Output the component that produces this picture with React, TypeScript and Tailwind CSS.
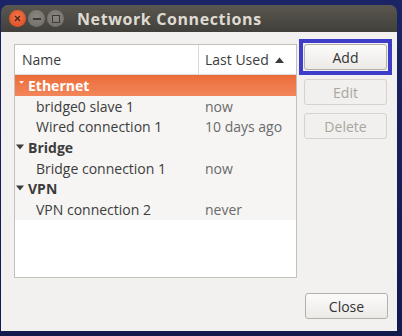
import React from 'react';

const font = { fontFamily: '"Open Sans", "DejaVu Sans", sans-serif' };

type Row = { name: string; used?: string; group?: boolean; selected?: boolean };

const rows: Row[] = [
  { name: 'Ethernet', group: true, selected: true },
  { name: 'bridge0 slave 1', used: 'now' },
  { name: 'Wired connection 1', used: '10 days ago' },
  { name: 'Bridge', group: true },
  { name: 'Bridge connection 1', used: 'now' },
  { name: 'VPN', group: true },
  { name: 'VPN connection 2', used: 'never' },
];

function Expander({ light }: { light?: boolean }) {
  if (light) {
    return (
      <svg width="5" height="4" viewBox="0 0 5 4" className="absolute left-[4px] top-[6px]">
        <path d="M0 0 H5 L2.5 3 Z" fill="#fff" opacity="0.85" />
      </svg>
    );
  }
  return (
    <svg width="8" height="6" viewBox="0 0 8 6" className="absolute left-[1px] top-[7px]">
      <path d="M0 0.5 H8 L4 5.5 Z" fill="#3c3c3c" />
    </svg>
  );
}

function TitleButtons() {
  return (
    <div className="flex items-center gap-[2px] pl-[8px]">
      <div className="w-[17px] h-[17px] rounded-full bg-[radial-gradient(circle_at_50%_40%,#f4764a,#d8451d)] flex items-center justify-center">
        <svg width="7" height="7" viewBox="0 0 7 7">
          <path d="M1 1 L6 6 M6 1 L1 6" stroke="#4a2418" strokeWidth="1.4" />
        </svg>
      </div>
      <div className="w-[17px] h-[17px] rounded-full bg-[radial-gradient(circle_at_50%_40%,#8a8780,#6c6a64)] flex items-center justify-center">
        <div className="w-[8px] h-[2px] bg-[#3b3a36]" />
      </div>
      <div className="w-[17px] h-[17px] rounded-full bg-[radial-gradient(circle_at_50%_40%,#8a8780,#6c6a64)] flex items-center justify-center">
        <div className="w-[8px] h-[8px] border-[1.5px] border-[#3b3a36]" />
      </div>
    </div>
  );
}

function Btn({ label, disabled }: { label: string; disabled?: boolean }) {
  return (
    <div
      className={
        disabled
          ? 'w-[83px] h-[26px] rounded-[3px] border border-[#d6d3ce] bg-[#f1f0ee] flex items-center justify-center text-[14px] text-[#a9a6a0]'
          : 'w-[83px] h-[26px] rounded-[3px] border border-[#b3b0aa] bg-gradient-to-b from-[#fbfbfa] to-[#eceae7] flex items-center justify-center text-[14px] text-[#333333]'
      }
    >
      {label}
    </div>
  );
}

export default function App() {
  return (
    <div className="w-[402px] h-[336px] bg-gradient-to-b from-[#1b2566] to-[#121a4e] overflow-hidden pt-[5px] pl-[1px]" style={font}>
      <div className="w-[396px] h-[326px] flex flex-col">
        {/* title bar */}
        <div className="h-[27px] shrink-0 rounded-t-[7px] bg-gradient-to-b from-[#5a5750] to-[#42403b] flex items-center">
          <TitleButtons />
          <span className="ml-[13px] text-[16px] font-bold text-[#dfdbd2] tracking-[0.6px]">Network Connections</span>
        </div>
        {/* body */}
        <div className="flex-1 bg-[#f2f1f0] flex pl-[13px] pt-[12px]">
          <div className="flex flex-col">
            <div className="w-[283px] h-[234px] border border-[#c4c1bc] bg-white flex flex-col">
              <div className="h-[30px] shrink-0 flex border-b border-[#dcdad6] text-[14px] text-[#3c3c3c]">
                <div className="w-[184px] border-r border-[#dcdad6] flex items-center pl-[7px]">Name</div>
                <div className="flex-1 flex items-center pl-[6px] gap-[6px]">
                  Last Used
                  <svg width="9" height="6" viewBox="0 0 9 6">
                    <path d="M0 6 L4.5 0.5 L9 6 Z" fill="#3c3c3c" />
                  </svg>
                </div>
              </div>
              <div className="flex flex-col">
                {rows.map((r) => (
                  <div
                    key={r.name}
                    className={
                      r.selected
                        ? 'h-[21px] flex items-center bg-gradient-to-b from-[#ec6c38] to-[#f2865a] text-white text-[14px]'
                        : 'h-[20.6px] flex items-center bg-[#f6f5f4] text-[#3c3c3c] text-[14px]'
                    }
                  >
                    <div className="w-[184px] relative flex items-center h-full">
                      {r.group && <Expander light={r.selected} />}
                      <span className={r.group ? 'pl-[13px] font-bold' : 'pl-[21px]'}>{r.name}</span>
                    </div>
                    <div className="pl-[6px] text-[#6a6a6a]">{r.used}</div>
                  </div>
                ))}
              </div>
            </div>
          </div>
          <div className="flex-1 flex flex-col items-start pl-[2px]">
            <div className="mt-[-5px] border-[4px] border-[#3d3dc9] p-[1px]">
              <Btn label="Add" />
            </div>
            <div className="mt-[4px] ml-[5px]">
              <Btn label="Edit" disabled />
            </div>
            <div className="mt-[8px] ml-[5px]">
              <Btn label="Delete" disabled />
            </div>
            <div className="mt-auto mb-[12px] ml-[6px]">
              <Btn label="Close" />
            </div>
          </div>
        </div>
      </div>
    </div>
  );
}
